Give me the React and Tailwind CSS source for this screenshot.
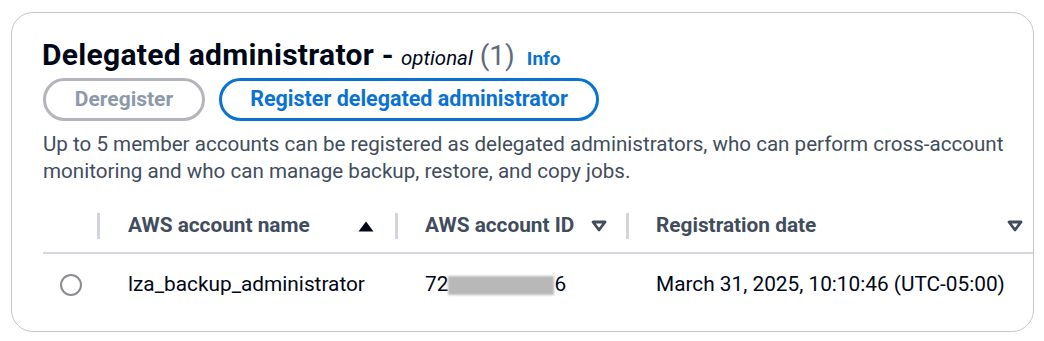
import React from "react";

function SortUp() {
  return (
    <svg width="16" height="11" viewBox="0 0 16 11" className="shrink-0">
      <polygon points="8,0.5 15.5,10.5 0.5,10.5" fill="#000716" />
    </svg>
  );
}

function SortDown() {
  return (
    <svg width="16" height="12" viewBox="0 0 16 12" className="shrink-0">
      <polygon
        points="2,2 14,2 8,10"
        fill="none"
        stroke="#414d5c"
        strokeWidth="2.8"
        strokeLinejoin="round"
      />
    </svg>
  );
}

function Sep() {
  return <div className="w-[3px] h-[26px] bg-[#d1d5db] shrink-0" />;
}

export default function App() {
  return (
    <div
      className="w-[1044px] h-[341px] bg-white pt-[12px] pl-[11px]"
      style={{ fontFamily: "Roboto, 'Open Sans', sans-serif" }}
    >
      <div className="w-[1023px] h-[320px] border border-[#c6c6cd] rounded-[22px] bg-white pt-[25px] pl-[30px] flex flex-col">
        <div className="flex items-baseline h-[34px] leading-[34px] whitespace-nowrap">
          <span className="text-[30px] font-bold text-[#000716] tracking-[0.3px]">
            Delegated administrator -
          </span>
          <span className="text-[20.5px] italic text-[#000716] ml-[7px]">optional</span>
          <span className="text-[28px] text-[#5f6b7a] ml-[7px]">(1)</span>
          <span className="text-[19px] font-bold text-[#0972d3] ml-[12px]">Info</span>
        </div>

        <div className="flex gap-[14px] mt-[6px] pl-[1px]">
          <div className="w-[162px] h-[43px] rounded-full border-[3px] border-[#b4b4bb] flex items-center justify-center text-[21px] font-bold text-[#8d99a8]">
            Deregister
          </div>
          <div className="w-[380px] h-[43px] rounded-full border-[3px] border-[#0972d3] flex items-center justify-center text-[21.5px] font-bold text-[#0972d3]">
            Register delegated administrator
          </div>
        </div>

        <p className="mt-[10px] text-[20.6px] leading-[27px] text-[#414d5c] pl-[1px] pr-[10px]">
          Up to 5 member accounts can be registered as delegated administrators, who can perform cross-account monitoring and who can manage backup, restore, and copy jobs.
        </p>

        <div className="mt-[15px] ml-[1px] flex flex-col">
          <div className="h-[54px] flex items-center border-b-[2px] border-[#d5d7dc] text-[20.8px] font-bold text-[#414d5c]">
            <div className="w-[54px]" />
            <Sep />
            <div className="w-[295px] flex items-center justify-between pl-[28px] pr-[21px]">
              <span>AWS account name</span>
              <SortUp />
            </div>
            <Sep />
            <div className="w-[228px] flex items-center justify-between pl-[27px] pr-[19px]">
              <span>AWS account ID</span>
              <SortDown />
            </div>
            <Sep />
            <div className="flex-1 flex items-center justify-between pl-[27px] pr-[10px]">
              <span>Registration date</span>
              <SortDown />
            </div>
          </div>
          <div className="h-[62px] flex items-center text-[20.8px] text-[#000716]">
            <div className="w-[57px] flex items-center">
              <div className="ml-[17px] w-[22px] h-[22px] rounded-full border-[2px] border-[#8c8c94]" />
            </div>
            <div className="w-[298px] pl-[28px]">lza_backup_administrator</div>
            <div className="w-[231px] pl-[27px] flex items-center">
              <span>72</span>
              <span className="inline-block w-[106px] h-[19px] bg-[#b8b8b8] blur-[1px]" />
              <span>6</span>
            </div>
            <div className="flex-1 pl-[27px] whitespace-nowrap">March 31, 2025, 10:10:46 (UTC-05:00)</div>
          </div>
        </div>
      </div>
    </div>
  );
}
